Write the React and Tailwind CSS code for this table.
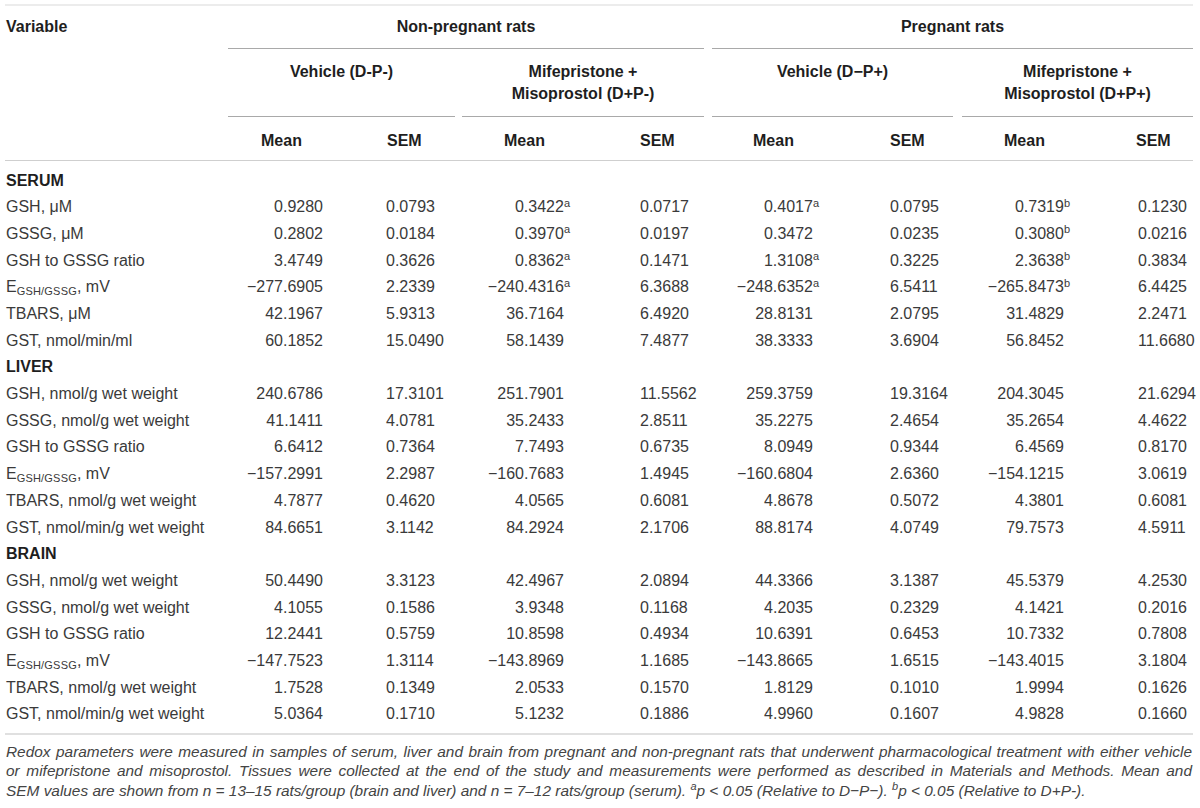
import React from "react";

const M = "\u2212";

const sections = [
  {
    title: "SERUM",
    rows: [
      ["GSH, \u03bcM", ["0.9280", "0.0793", "0.3422|a", "0.0717", "0.4017|a", "0.0795", "0.7319|b", "0.1230"]],
      ["GSSG, \u03bcM", ["0.2802", "0.0184", "0.3970|a", "0.0197", "0.3472", "0.0235", "0.3080|b", "0.0216"]],
      ["GSH to GSSG ratio", ["3.4749", "0.3626", "0.8362|a", "0.1471", "1.3108|a", "0.3225", "2.3638|b", "0.3834"]],
      ["E", [M + "277.6905", "2.2339", M + "240.4316|a", "6.3688", M + "248.6352|a", "6.5411", M + "265.8473|b", "6.4425"]],
      ["TBARS, \u03bcM", ["42.1967", "5.9313", "36.7164", "6.4920", "28.8131", "2.0795", "31.4829", "2.2471"]],
      ["GST, nmol/min/ml", ["60.1852", "15.0490", "58.1439", "7.4877", "38.3333", "3.6904", "56.8452", "11.6680"]],
    ],
  },
  {
    title: "LIVER",
    rows: [
      ["GSH, nmol/g wet weight", ["240.6786", "17.3101", "251.7901", "11.5562", "259.3759", "19.3164", "204.3045", "21.6294"]],
      ["GSSG, nmol/g wet weight", ["41.1411", "4.0781", "35.2433", "2.8511", "35.2275", "2.4654", "35.2654", "4.4622"]],
      ["GSH to GSSG ratio", ["6.6412", "0.7364", "7.7493", "0.6735", "8.0949", "0.9344", "6.4569", "0.8170"]],
      ["E", [M + "157.2991", "2.2987", M + "160.7683", "1.4945", M + "160.6804", "2.6360", M + "154.1215", "3.0619"]],
      ["TBARS, nmol/g wet weight", ["4.7877", "0.4620", "4.0565", "0.6081", "4.8678", "0.5072", "4.3801", "0.6081"]],
      ["GST, nmol/min/g wet weight", ["84.6651", "3.1142", "84.2924", "2.1706", "88.8174", "4.0749", "79.7573", "4.5911"]],
    ],
  },
  {
    title: "BRAIN",
    rows: [
      ["GSH, nmol/g wet weight", ["50.4490", "3.3123", "42.4967", "2.0894", "44.3366", "3.1387", "45.5379", "4.2530"]],
      ["GSSG, nmol/g wet weight", ["4.1055", "0.1586", "3.9348", "0.1168", "4.2035", "0.2329", "4.1421", "0.2016"]],
      ["GSH to GSSG ratio", ["12.2441", "0.5759", "10.8598", "0.4934", "10.6391", "0.6453", "10.7332", "0.7808"]],
      ["E", [M + "147.7523", "1.3114", M + "143.8969", "1.1685", M + "143.8665", "1.6515", M + "143.4015", "3.1804"]],
      ["TBARS, nmol/g wet weight", ["1.7528", "0.1349", "2.0533", "0.1570", "1.8129", "0.1010", "1.9994", "0.1626"]],
      ["GST, nmol/min/g wet weight", ["5.0364", "0.1710", "5.1232", "0.1886", "4.9960", "0.1607", "4.9828", "0.1660"]],
    ],
  },
];

const valueCls = [
  "text-right pr-[22px]",
  "text-left pl-[41px]",
  "text-right pr-[26px]",
  "text-left pl-[50px]",
  "text-right pr-[27px]",
  "text-left pl-[50px]",
  "text-right pr-[26px]",
  "text-left pl-[48px]",
];

const headCls = [
  "pl-[33px]",
  "pl-[42px]",
  "pl-[42px]",
  "pl-[50px]",
  "pl-[41px]",
  "pl-[50px]",
  "pl-[42px]",
  "pl-[46px]",
];

const GRID =
  "grid grid-cols-[223px_117px_117px_128px_122px_128px_122px_128px_103px]";

function Label({ text }) {
  if (text === "E") {
    return (
      <span>
        E<sub className="text-[11px] tracking-[0.2px]">GSH/GSSG</sub>, mV
      </span>
    );
  }
  return <span>{text}</span>;
}

function Value({ v }) {
  const [num, sup] = v.split("|");
  return (
    <span>
      {num}
      {sup && <sup className="text-[11px] mr-[-6px]">{sup}</sup>}
    </span>
  );
}

export default function App() {
  return (
    <div className="w-[1200px] h-[808px] bg-white pl-[5px] pt-[4px] font-['Liberation_Sans',Arial,sans-serif] text-[#3a3a3a] overflow-hidden">
      <div className="w-[1188px]">
        {/* header */}
        <div className="border-t-2 border-[#ececec] border-b border-b-[#cfcfcf]">
          <div className={GRID + " text-[16px] font-bold text-[#1e1e1e]"}>
            <div className="row-span-3 pl-[1px] pt-[11px] leading-[20px]">Variable</div>
            <div className="col-span-4 h-[43px] pr-[8px]">
              <div className="h-full border-b border-[#a9a9a9] pt-[11px] leading-[20px] text-center">
                Non-pregnant rats
              </div>
            </div>
            <div className="col-span-4 h-[43px]">
              <div className="h-full border-b border-[#a9a9a9] pt-[11px] leading-[20px] text-center">
                Pregnant rats
              </div>
            </div>

            <div className="col-span-2 h-[68px] pr-[7px]">
              <div className="h-full border-b border-[#a9a9a9] pt-[12px] leading-[22px] text-center">
                Vehicle (D-P-)
              </div>
            </div>
            <div className="col-span-2 h-[68px] pr-[8px]">
              <div className="h-full border-b border-[#a9a9a9] pt-[12px] leading-[22px] text-center">
                Mifepristone +<br />Misoprostol (D+P-)
              </div>
            </div>
            <div className="col-span-2 h-[68px] pr-[9px]">
              <div className="h-full border-b border-[#a9a9a9] pt-[12px] leading-[22px] text-center">
                Vehicle (D{M}P+)
              </div>
            </div>
            <div className="col-span-2 h-[68px]">
              <div className="h-full border-b border-[#a9a9a9] pt-[12px] leading-[22px] text-center">
                Mifepristone +<br />Misoprostol (D+P+)
              </div>
            </div>

            {["Mean", "SEM", "Mean", "SEM", "Mean", "SEM", "Mean", "SEM"].map((h, i) => (
              <div key={i} className={"h-[43px] pt-[13px] leading-[22px] " + headCls[i]}>
                {h}
              </div>
            ))}
          </div>
        </div>

        {/* body */}
        <div className="pt-[6.6px] pb-[4.7px] border-b-2 border-[#e0e0e0] text-[16px]">
          {sections.map((s) => (
            <div key={s.title}>
              <div className="h-[26.7px] leading-[26.7px] pl-[1px] font-bold text-[#1e1e1e]">{s.title}</div>
              {s.rows.map(([label, vals], ri) => (
                <div key={ri} className={GRID + " h-[26.7px] leading-[26.7px]"}>
                  <div className="pl-[1px] whitespace-nowrap">
                    <Label text={label} />
                  </div>
                  {vals.map((v, i) => (
                    <div key={i} className={"whitespace-nowrap " + valueCls[i]}>
                      <Value v={v} />
                    </div>
                  ))}
                </div>
              ))}
            </div>
          ))}
        </div>

        {/* footnote */}
        <div className="pt-[7px] pl-[1px] pr-[1px] text-[15.4px] leading-[19.5px] italic text-[#444]">
          <div className="text-justify [text-align-last:justify]">
            Redox parameters were measured in samples of serum, liver and brain from pregnant and non-pregnant rats that underwent pharmacological treatment with either vehicle
          </div>
          <div className="text-justify [text-align-last:justify]">
            or mifepristone and misoprostol. Tissues were collected at the end of the study and measurements were performed as described in Materials and Methods. Mean and
          </div>
          <div>
            SEM values are shown from n = 13{"\u2013"}15 rats/group (brain and liver) and n = 7{"\u2013"}12 rats/group (serum).{" "}
            <sup className="text-[11px]">a</sup>p &lt; 0.05 (Relative to D{M}P{M}).{" "}
            <sup className="text-[11px]">b</sup>p &lt; 0.05 (Relative to D+P-).
          </div>
        </div>
      </div>
    </div>
  );
}
